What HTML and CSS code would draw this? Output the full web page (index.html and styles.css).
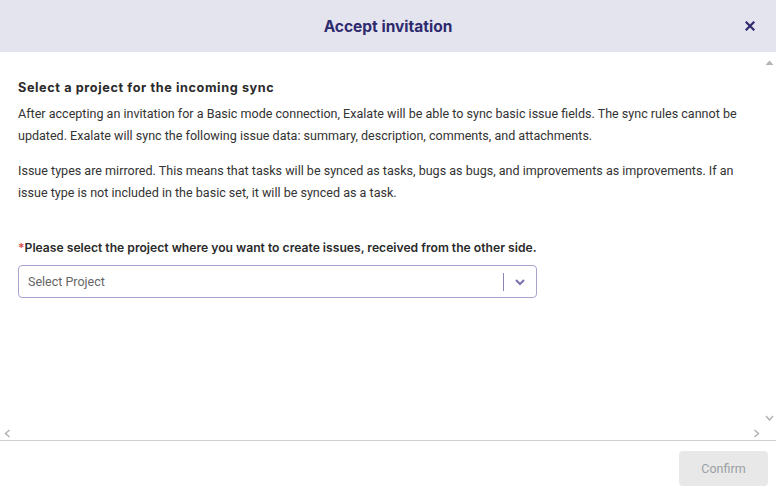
FILE: index.html
```html
<!DOCTYPE html>
<html>
<head>
<meta charset="utf-8">
<link rel="stylesheet" href="styles.css">
</head>
<body>
<div class="dialog">
  <header class="header">
    <h1 class="title">Accept invitation</h1>
    <button class="close" aria-label="Close">
      <svg width="10" height="10" viewBox="0 0 10 10"><path d="M1.5 1.5 L8.5 8.5 M8.5 1.5 L1.5 8.5" stroke="#2e2a6e" stroke-width="2.2" stroke-linecap="square"/></svg>
    </button>
  </header>
  <main class="content">
    <div class="inner">
      <h2 class="heading">Select a project for the incoming sync</h2>
      <p class="text">After accepting an invitation for a Basic mode connection, Exalate will be able to sync basic issue fields. The sync rules cannot be updated. Exalate will sync the following issue data: summary, description, comments, and attachments.</p>
      <p class="text">Issue types are mirrored. This means that tasks will be synced as tasks, bugs as bugs, and improvements as improvements. If an issue type is not included in the basic set, it will be synced as a task.</p>
      <label class="label"><span class="req">*</span>Please select the project where you want to create issues, received from the other side.</label>
      <div class="select">
        <span class="placeholder">Select Project</span>
        <span class="sep"></span>
        <svg class="chev" width="12" height="8" viewBox="0 0 12 8"><path d="M2 2 L6 6 L10 2" fill="none" stroke="#7b73b0" stroke-width="2"/></svg>
      </div>
    </div>
    <svg class="sb sb-up" width="9" height="7" viewBox="0 0 9 7"><path d="M0.5 6 L4.5 1.5 L8.5 6 Z" fill="#b5b5b5"/></svg>
    <svg class="sb sb-down" width="9" height="7" viewBox="0 0 9 7"><path d="M1 1 L4.5 5 L8 1" fill="none" stroke="#b5b5b5" stroke-width="1.5"/></svg>
    <svg class="sb sb-left" width="7" height="9" viewBox="0 0 7 9"><path d="M5.5 1 L1.5 4.5 L5.5 8" fill="none" stroke="#b5b5b5" stroke-width="1.6"/></svg>
    <svg class="sb sb-right" width="7" height="9" viewBox="0 0 7 9"><path d="M1.5 1 L5.5 4.5 L1.5 8" fill="none" stroke="#b5b5b5" stroke-width="1.6"/></svg>
  </main>
  <footer class="footer">
    <button class="confirm" disabled>Confirm</button>
  </footer>
</div>
</body>
</html>
```
FILE: styles.css
```css
* { box-sizing: border-box; }
html, body { margin: 0; padding: 0; }
body {
  width: 776px;
  height: 493px;
  background: #fff;
  font-family: Roboto, "Liberation Sans", sans-serif;
  overflow: hidden;
}
.dialog {
  display: flex;
  flex-direction: column;
  height: 493px;
}
.header {
  height: 52px;
  flex: none;
  background: #e4e4ef;
  display: flex;
  align-items: center;
  justify-content: center;
  position: relative;
}
.title {
  margin: 0;
  font-family: Inter, "Lato", sans-serif;
  font-size: 15.5px;
  font-weight: 700;
  color: #2e2a6e;
  letter-spacing: 0;
}
.close {
  position: absolute;
  right: 21px;
  top: 21px;
  width: 10px;
  height: 10px;
  padding: 0;
  border: 0;
  background: none;
  display: flex;
}
.content {
  flex: none;
  height: 389px;
  border-bottom: 1px solid #cfcfcf;
  position: relative;
}
.inner {
  padding: 27px 30px 0 18px;
}
.heading {
  margin: 0 0 6px;
  font-family: Inter, "Lato", sans-serif;
  font-size: 12.7px;
  font-weight: 700;
  color: #2a2a2a;
  letter-spacing: 0.6px;
  line-height: 18px;
}
.text {
  margin: 0 0 13px;
  font-size: 12.55px;
  line-height: 22px;
  color: #333;
}
.label {
  display: block;
  margin-top: 36px;
  font-family: Inter, "Lato", sans-serif;
  font-size: 12.15px;
  font-weight: 600;
  color: #2a2a2a;
  line-height: 16px;
}
.req { color: #d9534f; }
.select {
  margin-top: 9px;
  width: 519px;
  height: 33px;
  border: 1px solid #a9a4cf;
  border-radius: 4px;
  display: flex;
  align-items: center;
  padding-left: 9px;
}
.placeholder {
  flex: 1;
  font-size: 12.5px;
  color: #666;
}
.sep {
  width: 1px;
  height: 18px;
  background: #8c86b8;
}
.chev {
  margin: 0 10px 0 10px;
}
.sb { position: absolute; }
.sb-up { right: 2px; top: 7px; }
.sb-down { right: 2px; top: 363px; }
.sb-left { left: 4px; top: 377px; }
.sb-right { right: 16px; top: 377px; }
.footer {
  flex: 1;
  display: flex;
  justify-content: flex-end;
  align-items: flex-start;
  padding: 10px 8px 0 0;
}
.confirm {
  width: 89px;
  height: 35px;
  border: 0;
  border-radius: 4px;
  background: #e8e8e8;
  color: #9aa0a4;
  font-family: Roboto, "Liberation Sans", sans-serif;
  font-size: 12.5px;
}
```
